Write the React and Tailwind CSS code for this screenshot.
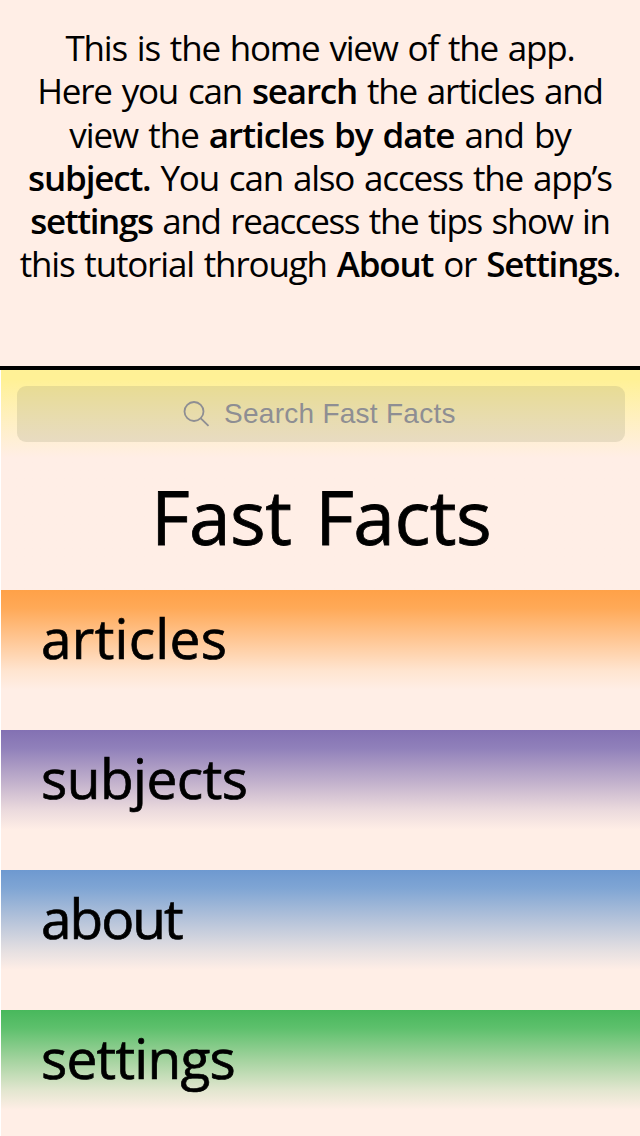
const lines = [
  { cls: 'tracking-[-1.2px]', parts: ['This is the home view of the app.'] },
  { cls: 'tracking-[-1.2px]', parts: ['Here you can ', ['search'], ' the articles and'] },
  { cls: 'tracking-[-1.03px]', parts: ['view the ', ['articles by date'], ' and by'] },
  { cls: 'tracking-[-1.18px]', parts: [['subject.'], ' You can also access the app’s'] },
  { cls: 'tracking-[-1.38px]', parts: [['settings'], ' and reaccess the tips show in'] },
  { cls: 'tracking-[-1.17px]', parts: ['this tutorial through ', ['About'], ' or ', ['Settings'], '.'] },
];

const items = [
  { label: 'articles', cls: 'tracking-[0.3px] bg-[linear-gradient(#ffa148,#ffa957_18px,#ffc795_50px,#ffe4cf_80px,#ffeee6_100px)]' },
  { label: 'subjects', cls: 'tracking-[-0.5px] bg-[linear-gradient(#8371b3,#9080ba_18px,#bfaecb_50px,#ebdadd_80px,#ffeee6_100px)]' },
  { label: 'about', cls: 'tracking-[-2px] bg-[linear-gradient(#6e99d0,#7fa5d4_18px,#b5c3da_50px,#e4dfe1_80px,#ffeee6_100px)]' },
  { label: 'settings', cls: 'tracking-[-0.75px] bg-[linear-gradient(#48b85c,#5dc06c_18px,#a4d39f_50px,#e2e6cf_80px,#ffeee6_100px)]' },
];

export default function App() {
  return (
    <div className="flex h-[1136px] w-[640px] flex-col overflow-hidden bg-[#ffeee6] font-['Trebuchet_MS','Open_Sans',sans-serif] text-black">
      <section className="h-[366px] shrink-0 pt-[26px] text-center text-[35px] leading-[43.3px] [word-spacing:2px]">
        {lines.map((l, i) => (
          <p key={i} className={`-mx-4 whitespace-nowrap ${l.cls}`}>
            {l.parts.map((p, j) => (Array.isArray(p) ? <b key={j} className="font-semibold">{p[0]}</b> : <span key={j}>{p}</span>))}
          </p>
        ))}
      </section>
      <main className="h-[770px] shrink-0 border-t-4 border-black">
        <div className="border-l border-white">
          <div className="h-[220px] bg-linear-to-b from-[#fff196] from-[10px] to-[#ffeee6] to-[88px] pt-4 pr-[15px] pl-4">
            <div className="flex h-14 items-center rounded-[9px] bg-[#8e8e70]/20 pl-[166px] font-['Liberation_Sans',sans-serif] text-[28px] text-[#8e8e93]">
              <svg className="mr-[14px] size-[27px]" viewBox="0 0 27 27" fill="none" stroke="currentColor" strokeWidth="1.8">
                <circle cx="11" cy="10.5" r="9.5" />
                <path d="M17.8 17.3 25.5 24.8" />
              </svg>
              <span className="tracking-[0.27px]">Search Fast Facts</span>
            </div>
            <h1 className="pt-[20px] text-center text-[75px] leading-[108px] tracking-[-0.6px] [-webkit-text-stroke:0.8px_black] [word-spacing:5px]">Fast Facts</h1>
          </div>
          {items.map((it) => (
            <div key={it.label} className={`h-[140px] pt-[10px] pl-[40px] text-[55px] leading-[76px] [-webkit-text-stroke:0.7px_black] ${it.cls}`}>
              {it.label}
            </div>
          ))}
        </div>
      </main>
    </div>
  );
}
